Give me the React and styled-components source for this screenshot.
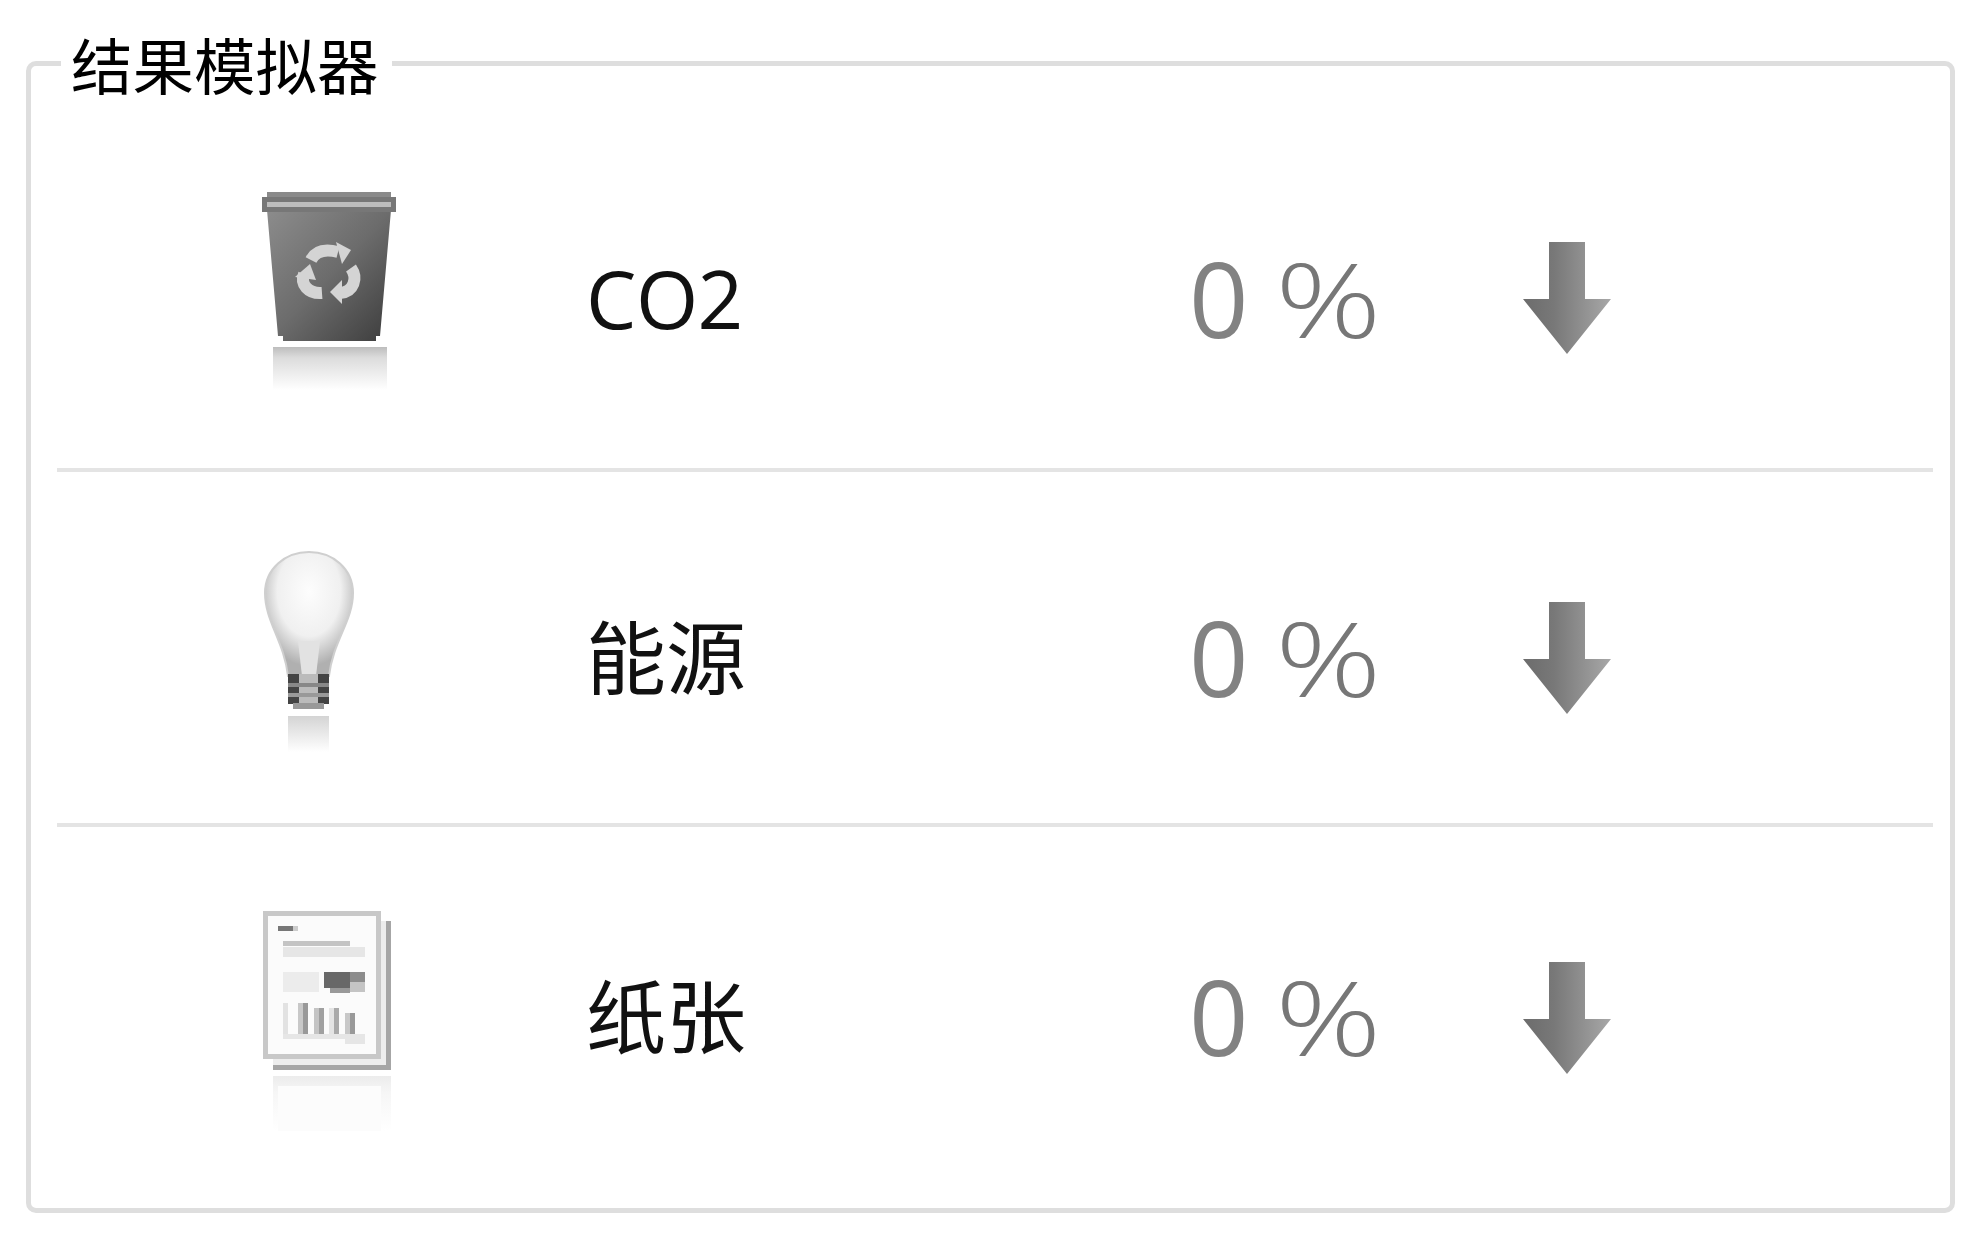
import React from "react";
import styled, { createGlobalStyle } from "styled-components";

const Global = createGlobalStyle`
  html, body { margin: 0; padding: 0; background: #fff; }
  body { width: 1975px; height: 1239px; overflow: hidden; }
`;

const Panel = styled.fieldset`
  box-sizing: border-box;
  width: 1929px;
  height: 1213px;
  margin: 0 0 0 26px;
  padding: 0 17px 0 26px;
  border: 5px solid #dedede;
  border-radius: 10px;
  min-inline-size: 0;
`;

const Title = styled.legend`
  margin-left: 4px;
  padding: 0 13px 0 10px;
  font: 400 61.5px/127px "Noto Sans CJK SC", sans-serif;
  color: #000;
`;

const Row = styled.div`
  box-sizing: border-box;
  height: ${(p) => p.$height}px;
  padding: ${(p) => p.$top}px 0 0 205px;
  display: grid;
  grid-template-columns: 324px 603px 333px 1fr;
  grid-template-rows: 220px;
  align-items: center;
  align-content: start;
  border-bottom: ${(p) => (p.$last ? "none" : "4px solid #e4e4e4")};
`;

const IconCell = styled.div`
  box-sizing: border-box;
  height: 220px;
  padding-top: ${(p) => p.$drop}px;
  display: flex;
  align-items: flex-start;
`;

const Label = styled.div`
  padding-bottom: 5px;
  font: 400 80px/110px "Open Sans", "Noto Sans CJK SC", sans-serif;
  color: #111;
  letter-spacing: ${(p) => (p.$latin ? "-0.5px" : "0")};
`;

const Value = styled.div`
  display: flex;
  align-items: baseline;
  gap: 27px;
  padding-bottom: 4px;
  font: 400 104px/110px "Open Sans", sans-serif;
  color: #828282;
`;

const Percent = styled.span`
  display: inline-block;
  font-weight: 300;
  color: #777;
  transform: scaleX(1.27);
  transform-origin: left center;
`;

const ArrowCell = styled.div`
  display: flex;
  padding-left: 1px;
  padding-bottom: ${(p) => p.$lift}px;
`;

const Arrow = () => (
  <svg width="88" height="112" viewBox="0 0 88 112">
    <defs>
      <linearGradient id="arrowFill" x1="0" y1="0" x2="1" y2="0">
        <stop offset="0" stopColor="#6c6c6c" />
        <stop offset="0.35" stopColor="#787878" />
        <stop offset="0.6" stopColor="#8a8a8a" />
        <stop offset="1" stopColor="#a8a8a8" />
      </linearGradient>
    </defs>
    <path d="M26 0H62V57H88L44 112L0 57H26Z" fill="url(#arrowFill)" />
  </svg>
);

const TrashIcon = () => (
  <svg width="135" height="220" viewBox="262 190 135 220">
    <defs>
      <linearGradient id="bin" x1="0" y1="0" x2="1" y2="1">
        <stop offset="0" stopColor="#8c8c8c" />
        <stop offset="0.5" stopColor="#6c6c6c" />
        <stop offset="1" stopColor="#3c3c3c" />
      </linearGradient>
      <linearGradient id="binRef" x1="0" y1="0" x2="0" y2="1">
        <stop offset="0" stopColor="#bdbdbd" />
        <stop offset="0.25" stopColor="#dcdcdc" />
        <stop offset="1" stopColor="#fff" />
      </linearGradient>
    </defs>
    <path d="M273 345H387V388H273Z" fill="url(#binRef)" />
    <path d="M267 208H391L380 334H376V339H283V334H278Z" fill="url(#bin)" />
    <rect x="267" y="190" width="124" height="10" fill="#8a8a8a" />
    <rect x="262" y="195" width="134" height="15" fill="#777" />
    <rect x="267" y="200" width="124" height="5" fill="#bdbdbd" />
    <g fill="none" stroke="#d4d4d4" strokeWidth="12">
      <path d="M311 258C316 248 326 247 338 250" />
      <path d="M351 266C358 276 354 290 340 291" />
      <path d="M322 291C308 292 300 282 304 272" />
    </g>
    <g fill="#d4d4d4">
      <path d="M336 240L351 248L342 262Z" />
      <path d="M342 278L342 302L330 290Z" />
      <path d="M295 275L310 262L316 278Z" />
    </g>
  </svg>
);

const BulbIcon = () => (
  <svg width="95" height="220" viewBox="262 549 95 220">
    <defs>
      <radialGradient id="glass" cx="0.5" cy="0.32" r="0.6">
        <stop offset="0" stopColor="#fdfdfd" />
        <stop offset="0.6" stopColor="#f0f0f0" />
        <stop offset="1" stopColor="#b0b0b0" />
      </radialGradient>
      <linearGradient id="bulbRef" x1="0" y1="0" x2="0" y2="1">
        <stop offset="0" stopColor="#d4d4d4" />
        <stop offset="1" stopColor="#fff" />
      </linearGradient>
    </defs>
    <path d="M309 551C333 551 353 568 353 592C353 620 333 640 329 675H288C284 640 265 620 265 592C265 568 285 551 309 551Z" fill="url(#glass)" stroke="#cfcfcf" strokeWidth="2" />
    <path d="M298 640H320L316 675H302Z" fill="#e2e2e2" />
    <rect x="288" y="673" width="41" height="30" fill="#444" />
    <rect x="299" y="673" width="19" height="30" fill="#bbb" />
    <rect x="288" y="682" width="41" height="4" fill="#888" />
    <rect x="288" y="692" width="41" height="4" fill="#999" />
    <rect x="293" y="702" width="31" height="6" fill="#999" />
    <rect x="288" y="715" width="41" height="36" fill="url(#bulbRef)" />
  </svg>
);

const DocIcon = () => (
  <svg width="130" height="225" viewBox="262 910 130 225" shapeRendering="crispEdges">
    <defs>
      <linearGradient id="docRef" x1="0" y1="0" x2="0" y2="1">
        <stop offset="0" stopColor="#ececec" />
        <stop offset="0.3" stopColor="#f6f6f6" />
        <stop offset="1" stopColor="#fff" />
      </linearGradient>
    </defs>
    <rect x="273" y="920" width="118" height="149" fill="#ededed" />
    <rect x="386" y="920" width="5" height="149" fill="#a6a6a6" />
    <rect x="273" y="1064" width="118" height="5" fill="#a6a6a6" />
    <rect x="263" y="910" width="118" height="148" fill="#c8c8c8" />
    <rect x="268" y="915" width="108" height="138" fill="#fbfbfb" />
    <rect x="278" y="925" width="15" height="5" fill="#777" />
    <rect x="293" y="925" width="5" height="5" fill="#ccc" />
    <rect x="283" y="940" width="67" height="5" fill="#c4c4c4" />
    <rect x="283" y="946" width="82" height="10" fill="#e6e6e6" />
    <rect x="283" y="971" width="36" height="20" fill="#ececec" />
    <rect x="324" y="971" width="26" height="16" fill="#686868" />
    <rect x="350" y="971" width="15" height="10" fill="#8c8c8c" />
    <rect x="350" y="981" width="15" height="10" fill="#c4c4c4" />
    <rect x="330" y="987" width="20" height="5" fill="#999" />
    <rect x="283" y="1002" width="5" height="31" fill="#e2e2e2" />
    <rect x="298" y="1002" width="5" height="31" fill="#c8c8c8" />
    <rect x="303" y="1002" width="5" height="31" fill="#999" />
    <rect x="314" y="1007" width="5" height="26" fill="#c4c4c4" />
    <rect x="319" y="1007" width="5" height="26" fill="#a0a0a0" />
    <rect x="329" y="1007" width="5" height="26" fill="#e4e4e4" />
    <rect x="334" y="1007" width="5" height="26" fill="#aaa" />
    <rect x="345" y="1012" width="5" height="21" fill="#c8c8c8" />
    <rect x="350" y="1012" width="5" height="21" fill="#999" />
    <rect x="283" y="1033" width="82" height="5" fill="#e6e6e6" />
    <rect x="345" y="1038" width="20" height="5" fill="#e6e6e6" />
    <rect x="273" y="1075" width="118" height="55" fill="url(#docRef)" />
    <rect x="278" y="1085" width="103" height="45" fill="#fcfcfc" />
  </svg>
);

const rows = [
  { label: "CO2", latin: true, height: 345, top: 63, drop: 2, lift: 5, Icon: TrashIcon },
  { label: "能源", height: 355, top: 77, drop: 1, lift: 3, Icon: BulbIcon },
  { label: "纸张", height: 381, top: 81, drop: 3, lift: 0, Icon: DocIcon, last: true },
];

export default function App() {
  return (
    <>
      <Global />
      <Panel>
        <Title>结果模拟器</Title>
        {rows.map(({ label, latin, height, top, drop, lift, Icon, last }) => (
          <Row key={label} $height={height} $top={top} $last={last}>
            <IconCell $drop={drop}><Icon /></IconCell>
            <Label $latin={latin}>{label}</Label>
            <Value><span>0</span><Percent>%</Percent></Value>
            <ArrowCell $lift={lift}><Arrow /></ArrowCell>
          </Row>
        ))}
      </Panel>
    </>
  );
}
